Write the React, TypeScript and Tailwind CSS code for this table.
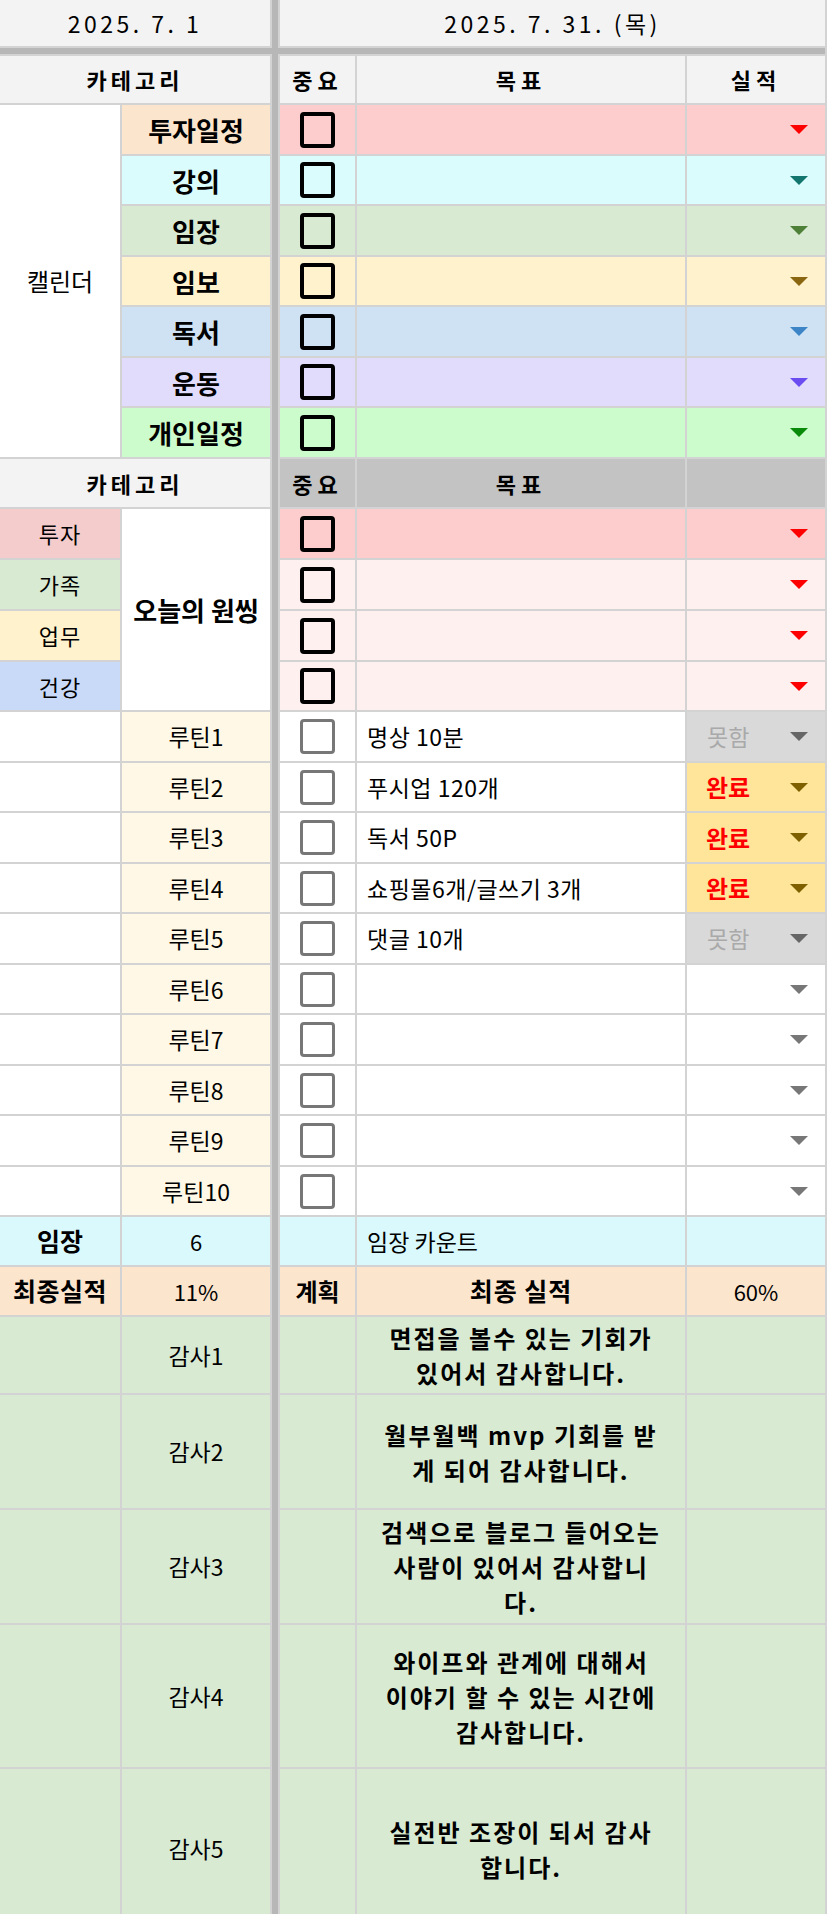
import React from 'react';

type CalRow = { label: string; labelBg: string; rowBg: string; tri: string };

const calendarRows: CalRow[] = [
  { label: '투자일정', labelBg: 'bg-[#fce5cd]', rowBg: 'bg-[#fdcdcd]', tri: '#ff0000' },
  { label: '강의', labelBg: 'bg-[#dbfcfd]', rowBg: 'bg-[#dbfcfd]', tri: '#12766f' },
  { label: '임장', labelBg: 'bg-[#d9ead3]', rowBg: 'bg-[#d9ead3]', tri: '#4f8038' },
  { label: '임보', labelBg: 'bg-[#fff2cc]', rowBg: 'bg-[#fff2cc]', tri: '#8a6610' },
  { label: '독서', labelBg: 'bg-[#cfe2f3]', rowBg: 'bg-[#cfe2f3]', tri: '#3d85c6' },
  { label: '운동', labelBg: 'bg-[#e1dcfc]', rowBg: 'bg-[#e1dcfc]', tri: '#6b4cf0' },
  { label: '개인일정', labelBg: 'bg-[#ccfccc]', rowBg: 'bg-[#ccfccc]', tri: '#0a8a0a' },
];

const wishRows = [
  { label: '투자', bg: 'bg-[#f4cccc]', rowBg: 'bg-[#fdcdcd]' },
  { label: '가족', bg: 'bg-[#d9ead3]', rowBg: 'bg-[#fff0f0]' },
  { label: '업무', bg: 'bg-[#fff2cc]', rowBg: 'bg-[#fff0f0]' },
  { label: '건강', bg: 'bg-[#c9daf8]', rowBg: 'bg-[#fff0f0]' },
];

type Status = 'no' | 'done' | '';

const routines: { text: string; status: Status }[] = [
  { text: '명상 10분', status: 'no' },
  { text: '푸시업 120개', status: 'done' },
  { text: '독서 50P', status: 'done' },
  { text: '쇼핑몰6개/글쓰기 3개', status: 'done' },
  { text: '댓글 10개', status: 'no' },
  { text: '', status: '' },
  { text: '', status: '' },
  { text: '', status: '' },
  { text: '', status: '' },
  { text: '', status: '' },
];

const thanks: string[][] = [
  ['면접을 볼수 있는 기회가', '있어서 감사합니다.'],
  ['월부월백 mvp 기회를 받', '게 되어 감사합니다.'],
  ['검색으로 블로그 들어오는', '사람이 있어서 감사합니', '다.'],
  ['와이프와 관계에 대해서', '이야기 할 수 있는 시간에', '감사합니다.'],
  ['실전반 조장이 되서 감사', '합니다.'],
];

const Tri = ({ color }: { color: string }) => (
  <svg width="18" height="9" viewBox="0 0 18 9" className="shrink-0">
    <path d="M0 0H18L9 9Z" fill={color} />
  </svg>
);

const Box = ({ dark }: { dark?: boolean }) =>
  dark ? (
    <div className="w-[35px] h-[36px] rounded-[4px] border-[4px] border-black" />
  ) : (
    <div className="w-[35px] h-[35px] rounded-[4px] border-[3px] border-[#777777]" />
  );

const center = 'flex items-center justify-center';

export default function App() {
  return (
    <div className="w-[827px] h-[1914px] overflow-hidden bg-white font-[family-name:'Noto_Sans_CJK_KR','Noto_Sans',sans-serif] text-black">
      <div className="grid gap-[2px] pr-[2px] bg-[#d3d3d3] grid-cols-[120px_148px_6px_75px_328px_138px] grid-rows-[46px_6px_47px_49px_48px_49px_48px_49px_48px_49px_48px_49px_49px_49px_48px_49px_48px_49px_48px_49px_48px_49px_48px_49px_48px_48px_48px_76px_113px_113px_142px_159px]">
        {/* separators */}
        <div className="col-start-3 row-span-full bg-[#b7b7b7]" />
        <div className="col-span-full row-start-2 bg-[#b7b7b7]" />

        {/* dates */}
        <div className={`col-span-2 bg-[#f3f3f3] text-[23px] tracking-[3.5px] ${center}`}>2025. 7. 1</div>
        <div className={`col-span-3 bg-[#f3f3f3] text-[23px] tracking-[3.5px] ${center}`}>2025. 7. 31. (목)</div>

        {/* header */}
        <div className={`col-span-2 bg-[#f3f3f3] text-[22px] font-bold tracking-[4px] ${center}`}>카테고리</div>
        <div className={`bg-[#f3f3f3] text-[22px] font-bold tracking-[5px] ${center}`}>중요</div>
        <div className={`bg-[#f3f3f3] text-[22px] font-bold tracking-[5px] ${center}`}>목표</div>
        <div className={`bg-[#f3f3f3] text-[22px] font-bold tracking-[5px] ${center}`}>실적</div>

        {/* calendar */}
        <div className={`row-span-7 bg-white text-[24px] ${center}`}>캘린더</div>
        {calendarRows.map((r) => (
          <React.Fragment key={r.label}>
            <div className={`${r.labelBg} text-[26px] font-bold ${center}`}>{r.label}</div>
            <div className={`${r.rowBg} ${center}`}>
              <Box dark />
            </div>
            <div className={r.rowBg} />
            <div className={`${r.rowBg} flex items-center justify-end pr-[17px]`}>
              <Tri color={r.tri} />
            </div>
          </React.Fragment>
        ))}

        {/* header 2 */}
        <div className={`col-span-2 bg-[#f3f3f3] text-[22px] font-bold tracking-[4px] ${center}`}>카테고리</div>
        <div className={`bg-[#c3c3c3] text-[22px] font-bold tracking-[5px] ${center}`}>중요</div>
        <div className={`bg-[#c3c3c3] text-[22px] font-bold tracking-[5px] ${center}`}>목표</div>
        <div className="bg-[#c3c3c3]" />

        {/* one thing */}
        {wishRows.map((w, i) => (
          <React.Fragment key={w.label}>
            <div className={`${w.bg} text-[22px] tracking-[1px] ${center}`}>{w.label}</div>
            {i === 0 && (
              <div className={`row-span-4 bg-white text-[26px] font-bold whitespace-nowrap ${center}`}>오늘의 원씽</div>
            )}
            <div className={`${w.rowBg} ${center}`}>
              <Box dark />
            </div>
            <div className={w.rowBg} />
            <div className={`${w.rowBg} flex items-center justify-end pr-[17px]`}>
              <Tri color="#ff0000" />
            </div>
          </React.Fragment>
        ))}

        {/* routines */}
        {routines.map((r, i) => (
          <React.Fragment key={i}>
            <div className="bg-white" />
            <div className={`bg-[#fff8e6] text-[23px] ${center}`}>루틴{i + 1}</div>
            <div className={`bg-white ${center}`}>
              <Box />
            </div>
            <div className="bg-white flex items-center pl-[10px] text-[23px] tracking-[0.5px] whitespace-nowrap">{r.text}</div>
            {r.status === 'done' ? (
              <div className="bg-[#ffe599] flex items-center justify-between pl-[19px] pr-[17px]">
                <span className="text-[24px] font-bold text-[#ff0000]">완료</span>
                <Tri color="#7f6000" />
              </div>
            ) : r.status === 'no' ? (
              <div className="bg-[#d9d9d9] flex items-center justify-between pl-[20px] pr-[17px]">
                <span className="text-[23px] text-[#a9a9a9]">못함</span>
                <Tri color="#666666" />
              </div>
            ) : (
              <div className="bg-white flex items-center justify-end pr-[17px]">
                <Tri color="#777777" />
              </div>
            )}
          </React.Fragment>
        ))}

        {/* 임장 count */}
        <div className={`bg-[#d9f9fd] text-[25px] font-bold ${center}`}>임장</div>
        <div className={`bg-[#d9f9fd] text-[22px] ${center}`}>6</div>
        <div className="bg-[#d9f9fd]" />
        <div className="bg-[#d9f9fd] flex items-center pl-[10px] text-[23px]">임장 카운트</div>
        <div className="bg-[#d9f9fd]" />

        {/* final */}
        <div className={`bg-[#fce5cd] text-[25px] font-bold tracking-[0.5px] whitespace-nowrap ${center}`}>최종실적</div>
        <div className={`bg-[#fce5cd] text-[22px] ${center}`}>11%</div>
        <div className={`bg-[#fce5cd] text-[24px] font-bold ${center}`}>계획</div>
        <div className={`bg-[#fce5cd] text-[25px] font-bold tracking-[1px] ${center}`}>최종 실적</div>
        <div className={`bg-[#fce5cd] text-[22px] ${center}`}>60%</div>

        {/* thanks */}
        {thanks.map((lines, i) => (
          <React.Fragment key={i}>
            <div className="bg-[#d9ead3]" />
            <div className={`bg-[#d9ead3] text-[23px] ${center}`}>감사{i + 1}</div>
            <div className="bg-[#d9ead3]" />
            <div className={`bg-[#d9ead3] flex-col text-[24px] font-bold tracking-[2px] leading-[35px] text-center whitespace-nowrap ${center}`}>
              {lines.map((l) => (
                <span key={l}>{l}</span>
              ))}
            </div>
            <div className="bg-[#d9ead3]" />
          </React.Fragment>
        ))}
      </div>
    </div>
  );
}
